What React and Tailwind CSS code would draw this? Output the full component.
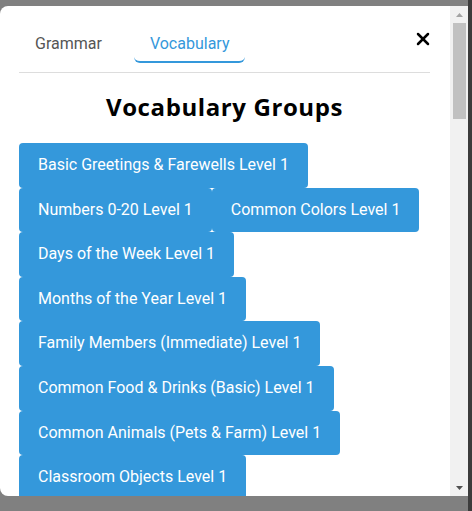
import React, { useState } from "react";
import { X } from "lucide-react";

const groups = [
  "Basic Greetings & Farewells Level 1",
  "Numbers 0-20 Level 1",
  "Common Colors Level 1",
  "Days of the Week Level 1",
  "Months of the Year Level 1",
  "Family Members (Immediate) Level 1",
  "Common Food & Drinks (Basic) Level 1",
  "Common Animals (Pets & Farm) Level 1",
  "Classroom Objects Level 1",
  "Body Parts (Head & Face) Level 1",
  "Clothing (Basic) Level 1",
  "Weather Level 1",
  "Feelings & Emotions Level 1",
  "House & Rooms Level 1",
  "Telling Time Level 1",
  "Jobs & Occupations Level 1",
  "Places in Town Level 1",
  "Transportation Level 1",
  "Hobbies & Free Time Level 1",
  "Sports Level 1",
  "Fruits & Vegetables Level 1",
  "Shapes Level 1",
  "Opposites Level 1",
  "Common Verbs Level 1",
  "Common Adjectives Level 1",
  "Numbers 21-100 Level 2",
  "Family Members (Extended) Level 2",
  "Seasons Level 2",
  "Kitchen Items Level 2",
  "Furniture Level 2",
  "Shopping Level 2",
  "Restaurant Level 2",
  "Health & Illness Level 2",
  "Travel & Holidays Level 2",
  "Nature & Landscape Level 2",
  "Wild Animals Level 2",
  "School Subjects Level 2",
  "Musical Instruments Level 2",
  "Daily Routine Level 2",
  "Directions Level 2",
  "Technology Level 2",
  "Countries & Nationalities Level 2",
  "Personality Traits Level 2",
  "Insects & Bugs Level 2",
  "Tools Level 2",
  "Celebrations Level 2",
  "Money & Banking Level 3",
  "Environment Level 3",
  "Work & Office Level 3",
];

// classic scrollbar, drawn because the headless browser hides real ones
const Scrollbar = () => (
  <div className="flex h-full w-[18px] shrink-0 flex-col items-center bg-[#f1f1f1]">
    <div className="flex h-[17px] w-full items-center justify-center pt-[1px]">
      <svg width="7" height="4" viewBox="0 0 7 4">
        <path d="M3.5 0 7 4H0z" fill="#a3a3a3" />
      </svg>
    </div>
    <div className="h-[96px] w-[13px] bg-[#c1c1c1]" />
    <div className="flex-1" />
    <div className="flex h-[17px] w-full items-center justify-center">
      <svg width="7" height="4" viewBox="0 0 7 4">
        <path d="M0 0h7L3.5 4z" fill="#505050" />
      </svg>
    </div>
  </div>
);

export default function App() {
  const [tab, setTab] = useState("vocabulary");

  return (
    <div className="flex h-[511px] w-[472px] overflow-hidden bg-[#808080] font-[Roboto,sans-serif]">
      <div className="pt-[6px]">
        <div className="flex h-[490px] w-[468px] overflow-hidden rounded-l-lg bg-white">
          <div className="min-w-0 flex-1 overflow-hidden pt-[19px] pr-5 pl-[19px]">
            <div className="flex items-start justify-between border-b border-[#dddddd] pb-[9px]">
              <div className="flex gap-4">
                <button
                  onClick={() => setTab("grammar")}
                  className={`rounded-md border-b-2 px-4 pt-[7px] pb-[5px] text-base leading-6 ${
                    tab === "grammar" ? "border-[#3498db] text-[#3498db]" : "border-transparent text-[#555555]"
                  }`}
                >
                  Grammar
                </button>
                <button
                  onClick={() => setTab("vocabulary")}
                  className={`rounded-md border-b-2 px-4 pt-[7px] pb-[5px] text-base leading-6 ${
                    tab === "vocabulary" ? "border-[#3498db] text-[#3498db]" : "border-transparent text-[#555555]"
                  }`}
                >
                  Vocabulary
                </button>
              </div>
              <button className="mt-[4px] mr-[-3px] text-black">
                <X size={20} strokeWidth={3} />
              </button>
            </div>

            <h2 className="mt-[16px] mb-[18px] text-center font-['Open_Sans',sans-serif] text-2xl leading-9 font-bold tracking-[0.6px] text-black">
              Vocabulary Groups
            </h2>

            <div className="flex flex-wrap pb-5">
              {groups.map((g) => (
                <button
                  key={g}
                  className="rounded bg-[#3498db] px-[19px] py-3 text-base leading-[20.6px] text-white"
                >
                  {g}
                </button>
              ))}
            </div>
          </div>
          <Scrollbar />
        </div>
      </div>
      <div className="h-full w-[4px] bg-[#3c3c3c]" />
    </div>
  );
}
